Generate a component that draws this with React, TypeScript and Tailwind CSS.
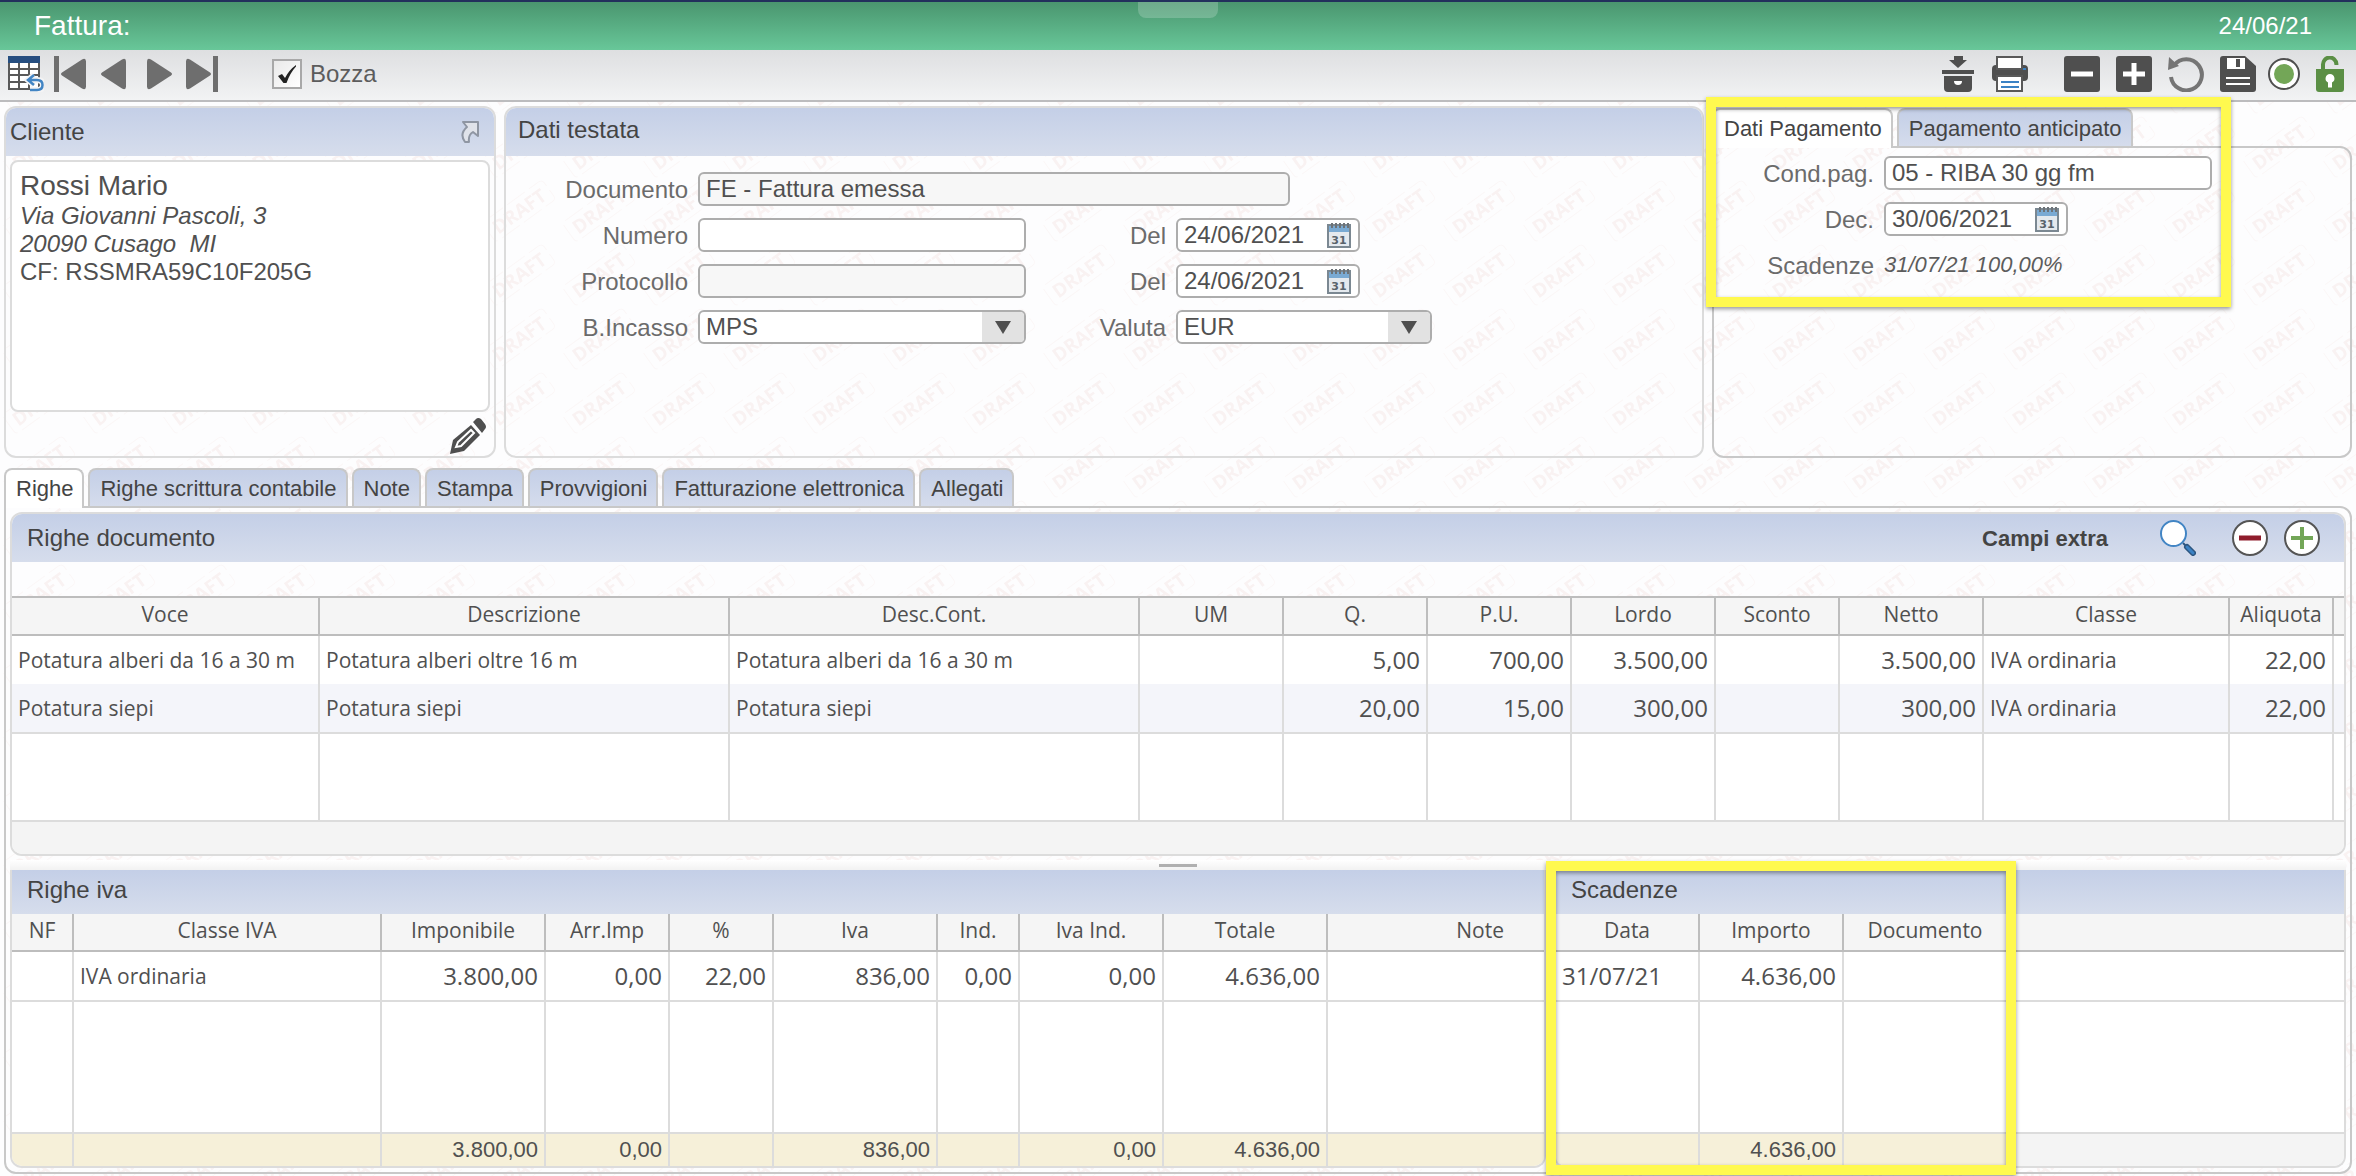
import { useState } from 'react'
import type { ReactNode } from 'react'

type Column = {
    label: string;
    width?: string;
    align?: string;
    header?: string;
}

const TEXT = "text-left text-[21px]";
const NUMBER = "text-right text-2xl";

const righeColumns: Column[] = [
    { label: "Voce", width: "w-[308px]", align: TEXT },
    { label: "Descrizione", width: "w-[410px]", align: TEXT },
    { label: "Desc.Cont.", width: "w-[410px]", align: TEXT },
    { label: "UM", width: "w-[144px]", align: TEXT },
    { label: "Q.", width: "w-[144px]", align: NUMBER },
    { label: "P.U.", width: "w-[144px]", align: NUMBER },
    { label: "Lordo", width: "w-[144px]", align: NUMBER },
    { label: "Sconto", width: "w-[124px]", align: NUMBER },
    { label: "Netto", width: "w-[144px]", align: NUMBER },
    { label: "Classe", width: "w-[246px]", align: TEXT },
    { label: "Aliquota", width: "w-[104px]", align: NUMBER },
    { label: "" },
];

const righeRows = [
    ["Potatura alberi da 16 a 30 m", "Potatura alberi oltre 16 m", "Potatura alberi da 16 a 30 m", "", "5,00", "700,00", "3.500,00", "", "3.500,00", "IVA ordinaria", "22,00", ""],
    ["Potatura siepi", "Potatura siepi", "Potatura siepi", "", "20,00", "15,00", "300,00", "", "300,00", "IVA ordinaria", "22,00", ""],
];

const ivaColumns: Column[] = [
    { label: "NF", width: "w-[62px]", align: TEXT },
    { label: "Classe IVA", width: "w-[308px]", align: TEXT },
    { label: "Imponibile", width: "w-[164px]", align: NUMBER },
    { label: "Arr.Imp", width: "w-[124px]", align: NUMBER },
    { label: "%", width: "w-[104px]", align: NUMBER },
    { label: "Iva", width: "w-[164px]", align: NUMBER },
    { label: "Ind.", width: "w-[82px]", align: NUMBER },
    { label: "Iva Ind.", width: "w-[144px]", align: NUMBER },
    { label: "Totale", width: "w-[164px]", align: NUMBER },
    { label: "Note", align: TEXT, header: "text-right pr-10" },
];

const ivaRows = [["", "IVA ordinaria", "3.800,00", "0,00", "22,00", "836,00", "0,00", "0,00", "4.636,00", ""]];
const ivaTotals = ["", "", "3.800,00", "0,00", "", "836,00", "", "0,00", "4.636,00", ""];

const scadenzeColumns: Column[] = [
    { label: "Data", width: "w-[144px]", align: "text-left text-2xl" },
    { label: "Importo", width: "w-[144px]", align: NUMBER },
    { label: "Documento", width: "w-[164px]", align: TEXT },
    { label: "" },
];

const scadenzeRows = [["31/07/21", "4.636,00", "", ""]];
const scadenzeTotals = ["", "4.636,00", "", ""];

const tabs = ["Righe", "Righe scrittura contabile", "Note", "Stampa", "Provvigioni", "Fatturazione elettronica", "Allegati"];

function DraftPattern() {
    return (
        <svg className="absolute inset-0 -z-10 h-full w-full" aria-hidden="true">
            <defs>
                <pattern id="draft" x="-1" y="-13" width="80" height="64" patternUnits="userSpaceOnUse">
                    <g transform="rotate(-36 40 32)">
                        <rect x="3" y="20" width="74" height="24" rx="4" fill="none" stroke="#fbf7f7" strokeDasharray="22 5" />
                        <text x="40" y="39" textAnchor="middle" fontFamily="Open Sans, sans-serif" fontSize="19" fontWeight="700" fill="#f9f2f2">DRAFT</text>
                    </g>
                </pattern>
            </defs>
            <rect width="100%" height="100%" fill="url(#draft)" />
        </svg>
    )
}

function IconButton({ label, className = "", children }: { label: string; className?: string; children: ReactNode }) {
    return (
        <button type="button" aria-label={label} className={`block shrink-0 cursor-pointer ${className}`}>
            {children}
        </button>
    )
}

function Toolbar() {
    const [draft, setDraft] = useState(true);

    return (
        <div className="flex h-[52px] items-center justify-between border-b-2 border-[#bcbcbe] bg-linear-to-b from-[#dedfe1] to-[#f2f3f4] pr-3 pb-[2px] pl-2">
            <div className="flex items-center">
                <IconButton label="Elenco">
                    <svg width="36" height="36" viewBox="0 0 36 36">
                        <rect x="1" y="1" width="30" height="32" fill="#fff" stroke="#595959" strokeWidth="2" />
                        <path d="M1 13h30M1 19h30M1 26h30M11 7v26M21 7v26" stroke="#595959" strokeWidth="2" />
                        <rect width="32" height="7" fill="#264e80" />
                        <path d="M26 19l-6 5 6 5M20 24h9q6 0 6 5t-6 5h-7" fill="none" stroke="#f4f4f5" strokeWidth="6" />
                        <path d="M26 19l-6 5 6 5M20 24h9q5.500 0 5.500 5t-5.500 5h-7" fill="none" stroke="#4285c4" strokeWidth="2.500" />
                    </svg>
                </IconButton>
                <IconButton label="Primo" className="ml-[10px]">
                    <svg width="32" height="36" viewBox="0 0 32 36" fill="#6e6e6e">
                        <path d="M0 0h5v36H0zM8 16.500L28 3.500q4-2 4 2v25q0 4-4 2L8 19.500q-2-1.500 0-3z" />
                    </svg>
                </IconButton>
                <IconButton label="Precedente" className="ml-[15px]">
                    <svg width="25" height="36" viewBox="0 0 25 36" fill="#6e6e6e">
                        <path d="M1 16.500L21 3.500q4-2 4 2v25q0 4-4 2L1 19.500q-2-1.500 0-3z" />
                    </svg>
                </IconButton>
                <IconButton label="Successivo" className="ml-[21px]">
                    <svg width="25" height="36" viewBox="0 0 25 36" fill="#6e6e6e">
                        <path d="M24 16.500L4 3.500q-4-2-4 2v25q0 4 4 2l20-13q2-1.500 0-3z" />
                    </svg>
                </IconButton>
                <IconButton label="Ultimo" className="ml-[14px]">
                    <svg width="32" height="36" viewBox="0 0 32 36" fill="#6e6e6e">
                        <path d="M27 0h5v36h-5zM24 16.500L4 3.500q-4-2-4 2v25q0 4 4 2l20-13q2-1.500 0-3z" />
                    </svg>
                </IconButton>
                <label className="ml-[54px] flex cursor-pointer items-center gap-2 text-2xl text-[#5c5c5c]">
                    <span className="relative block h-[30px] w-[30px]">
                        <input
                            type="checkbox"
                            checked={draft}
                            onChange={() => setDraft(!draft)}
                            className="block h-[30px] w-[30px] appearance-none border-2 border-[#a8a8a8] bg-linear-to-br from-[#e9e9e9] to-white"
                        />
                        {draft && (
                            <svg className="pointer-events-none absolute inset-0" width="30" height="30" viewBox="0 0 30 30">
                                <path d="M6 17l4-2 3 4Q17 11 24 6l0 1.500Q18 14 14.500 24h-3z" fill="#222" />
                            </svg>
                        )}
                    </span>
                    Bozza
                </label>
            </div>
            <div className="flex items-center">
                <IconButton label="Archivia">
                    <svg width="32" height="36" viewBox="0 0 32 36" fill="#4f4f4f">
                        <path d="M12 0h9v4h4l-9 8-9-8h5zM0 14h32v4H0zM2 20h28v12q0 4-4 4H6q-4 0-4-4z" />
                        <path d="M12 25h8q0 4-4 4t-4-4z" fill="#fff" />
                    </svg>
                </IconButton>
                <IconButton label="Stampa" className="ml-[18px]">
                    <svg width="36" height="36" viewBox="0 0 36 36">
                        <path d="M4 9h28q4 0 4 4v8q0 4-4 4H4q-4 0-4-4v-8q0-4 4-4z" fill="#4f4f4f" />
                        <path d="M5 1h25v12H5zM5 20h25v15H5z" fill="#fff" stroke="#595959" strokeWidth="2" />
                        <path d="M9 26h18M9 31h18" stroke="#3b82c4" strokeWidth="2" />
                        <path d="M31 12h3v2h-3z" fill="#3b82c4" />
                    </svg>
                </IconButton>
                <IconButton label="Elimina" className="ml-9">
                    <svg width="36" height="36" viewBox="0 0 36 36">
                        <rect width="36" height="36" rx="3" fill="#4f4f4f" />
                        <path d="M7 18h22" stroke="#fff" strokeWidth="5" />
                    </svg>
                </IconButton>
                <IconButton label="Nuovo" className="ml-4">
                    <svg width="36" height="36" viewBox="0 0 36 36">
                        <rect width="36" height="36" rx="3" fill="#4f4f4f" />
                        <path d="M7 18h22M18 7v22" stroke="#fff" strokeWidth="5" />
                    </svg>
                </IconButton>
                <IconButton label="Annulla" className="ml-4">
                    <svg width="36" height="36" viewBox="0 0 36 36">
                        <path d="M6 9.500A15.500 15.500 0 1 1 3 21" fill="none" stroke="#757575" strokeWidth="4" />
                        <path d="M1 1l10 9-11 4z" fill="#757575" />
                    </svg>
                </IconButton>
                <IconButton label="Salva" className="ml-4">
                    <svg width="36" height="36" viewBox="0 0 36 36">
                        <path d="M3 0h22l11 10v23q0 3-3 3H3q-3 0-3-3V3q0-3 3-3z" fill="#4f4f4f" />
                        <path d="M7 2h18v11H7z" fill="#fff" />
                        <path d="M16 3h4v8h-4z" fill="#4f4f4f" />
                        <path d="M6 22h24M6 28h24" stroke="#fff" strokeWidth="2" />
                    </svg>
                </IconButton>
                <IconButton label="Stato" className="ml-3">
                    <svg width="32" height="36" viewBox="0 0 32 36">
                        <circle cx="16" cy="18" r="15" fill="#fff" stroke="#4f4f4f" strokeWidth="2" />
                        <circle cx="16" cy="18" r="10" fill="#73a657" />
                    </svg>
                </IconButton>
                <IconButton label="Sblocca" className="ml-4">
                    <svg width="28" height="36" viewBox="0 0 28 36">
                        <path d="M7 14V9a6.700 7 0 0 1 13.400-1v1" fill="none" stroke="#5b8f45" strokeWidth="4" />
                        <path d="M0 13h28v20q0 3-3 3H3q-3 0-3-3z" fill="#5b8f45" />
                        <path d="M14 18a4.500 4.500 0 0 1 2 8.500v5h-4v-5A4.500 4.500 0 0 1 14 18z" fill="#fff" />
                    </svg>
                </IconButton>
            </div>
        </div>
    )
}

function CalendarIcon() {
    return (
        <svg width="24" height="26" viewBox="0 0 24 26">
            <rect x="1" y="3" width="22" height="22" fill="#e4e9ee" stroke="#7b8892" strokeWidth="2" />
            <rect x="2" y="4" width="20" height="6" fill="#7aaad3" />
            <path d="M5 1v5M9 1v5M13 1v5M17 1v5M21 1v5" stroke="#6d7378" strokeWidth="2" />
            <text x="12" y="22" textAnchor="middle" fontFamily="DejaVu Sans, sans-serif" fontSize="11" fontWeight="700" fill="#59636b">31</text>
        </svg>
    )
}

function TextField({ id, value = "", readOnly = false, className }: { id: string; value?: string; readOnly?: boolean; className: string }) {
    return (
        <input
            id={id}
            type="text"
            defaultValue={value}
            readOnly={readOnly}
            className={`h-[34px] rounded-md border-2 border-[#adadad] px-[6px] text-2xl leading-[30px] text-[#505050] ${readOnly ? "bg-[#f7f7f7]" : "bg-white"} ${className}`}
        />
    )
}

function DateField({ id, value }: { id: string; value: string }) {
    return (
        <div className="flex h-[34px] w-[184px] items-center rounded-md border-2 border-[#adadad] bg-white pr-[7px] pl-[6px]">
            <input id={id} type="text" defaultValue={value} className="w-full min-w-0 text-2xl leading-[30px] text-[#505050]" />
            <IconButton label="Apri calendario">
                <CalendarIcon />
            </IconButton>
        </div>
    )
}

function SelectField({ id, value, className }: { id: string; value: string; className: string }) {
    return (
        <div className={`relative h-[34px] ${className}`}>
            <select id={id} defaultValue={value} className="h-[34px] w-full appearance-none rounded-md border-2 border-[#adadad] bg-white px-[6px] text-2xl leading-[30px] text-[#505050]">
                <option>{value}</option>
            </select>
            <span className="pointer-events-none absolute inset-y-[2px] right-[2px] flex w-[42px] items-center justify-center rounded-r bg-[#e2e2e2]">
                <svg width="16" height="13" viewBox="0 0 16 13" fill="#4f4f4f">
                    <path d="M0 0h16L8 13z" />
                </svg>
            </span>
        </div>
    )
}

function FieldLabel({ htmlFor, children }: { htmlFor: string; children: ReactNode }) {
    return (
        <label htmlFor={htmlFor} className="text-right text-2xl leading-[35px] text-[#6b6b6b]">{children}</label>
    )
}

function Tab({ active = false, onClick, children }: { active?: boolean; onClick?: () => void; children: ReactNode }) {
    return (
        <button
            type="button"
            role="tab"
            aria-selected={active}
            onClick={onClick}
            className={`cursor-pointer rounded-t-lg border-2 border-b-0 border-[#c8c8c8] pr-[9px] pl-[10px] text-[22px] whitespace-nowrap text-[#444] ${active ? "h-10 bg-white pb-[2px]" : "h-[38px] bg-linear-to-b from-[#c4cfe7] to-[#d5dcec]"}`}
        >
            {children}
        </button>
    )
}

function DataTable({ columns, rows, totals, spacer }: { columns: Column[]; rows: string[][]; totals?: string[]; spacer: string }) {
    const line = (i: number) => i < columns.length - 1 ? "border-r-2" : "";

    return (
        <table className="w-full table-fixed border-separate border-spacing-0 font-['Open_Sans',sans-serif] text-[#505050]">
            <thead>
                <tr className="h-[38px]">
                    {columns.map((column, i) => (
                        <th key={i} className={`border-b-2 border-[#bdbdbd] bg-[#f5f5f5] px-[6px] pb-1 text-[21px] leading-7 font-normal ${column.width ?? ""} ${column.header ?? "text-center"} ${line(i)}`}>
                            {column.label}
                        </th>
                    ))}
                </tr>
            </thead>
            <tbody className="bg-white">
                {rows.map((row, r) => (
                    <tr key={r} className={`${r % 2 ? "bg-[#f4f5fa]" : ""} ${r === rows.length - 1 ? "h-[50px]" : "h-12"}`}>
                        {row.map((cell, i) => (
                            <td key={i} className={`border-[#dcdcdc] px-[6px] leading-7 whitespace-nowrap ${columns[i].align ?? ""} ${line(i)} ${r === rows.length - 1 ? "border-b-2" : ""}`}>
                                {cell}
                            </td>
                        ))}
                    </tr>
                ))}
                <tr className={spacer}>
                    {columns.map((_, i) => (
                        <td key={i} className={`border-[#dcdcdc] ${line(i)}`}></td>
                    ))}
                </tr>
            </tbody>
            {totals && (
                <tfoot>
                    <tr className="h-[34px] font-['Liberation_Sans',sans-serif]">
                        {totals.map((total, i) => (
                            <td key={i} className={`border-t-2 border-[#dcdcdc] px-[6px] text-right text-[22px] leading-7 ${columns[i].label ? `bg-[#f6f0d9] ${line(i)}` : "bg-[#f4f4f4]"}`}>
                                {total}
                            </td>
                        ))}
                    </tr>
                </tfoot>
            )}
        </table>
    )
}

function Cliente() {
    return (
        <section className="w-[492px] shrink-0 overflow-hidden rounded-xl border-2 border-[#dcdcdc]">
            <div className="flex h-12 items-center justify-between bg-linear-to-b from-[#c4cfe7] to-[#d6ddec] pr-[14px] pl-1">
                <h2 className="text-2xl text-[#444]">Cliente</h2>
                <IconButton label="Apri cliente">
                    <svg width="20" height="24" viewBox="0 0 20 24">
                        <path d="M3 2h15v14l-5-4q-5 3-4 10H5Q-1 14 7 7z" fill="#e0e3ea" stroke="#8f96a3" strokeWidth="2" strokeLinejoin="round" />
                    </svg>
                </IconButton>
            </div>
            <div className="m-1 mb-0 h-[252px] rounded-lg border-2 border-[#dcdcdc] bg-white px-2 pt-2 text-2xl leading-7 text-[#505050]">
                <p className="text-[28px] leading-8">Rossi Mario</p>
                <p className="italic">Via Giovanni Pascoli, 3</p>
                <p className="whitespace-pre italic">20090 Cusago  MI</p>
                <p>CF: RSSMRA59C10F205G</p>
            </div>
            <div className="flex justify-end pt-[6px] pr-2 pb-[2px]">
                <IconButton label="Modifica cliente">
                    <svg width="36" height="36" viewBox="0 0 36 36" fill="#4f4f4f">
                        <path d="M23 4l3-3q2-2 5 0l4 5q2 3 0 5l-3 4z" />
                        <path d="M21 7l9 10-16 16-14 3 3-14z" />
                        <path d="M6 29l2-5L21 12l3 3-13 13z" fill="none" stroke="#fff" strokeWidth="2" />
                    </svg>
                </IconButton>
            </div>
        </section>
    )
}

function DatiTestata() {
    return (
        <section className="min-w-0 flex-1 overflow-hidden rounded-xl border-2 border-[#dcdcdc]">
            <h2 className="h-12 bg-linear-to-b from-[#c4cfe7] to-[#d6ddec] pl-3 text-2xl leading-[44px] text-[#444]">Dati testata</h2>
            <div className="grid auto-rows-[34px] grid-cols-[182px_328px_130px_256px] gap-x-[10px] gap-y-3 pt-4">
                <FieldLabel htmlFor="documento">Documento</FieldLabel>
                <TextField id="documento" value="FE - Fattura emessa" readOnly className="col-span-3 w-[592px]" />
                <FieldLabel htmlFor="numero">Numero</FieldLabel>
                <TextField id="numero" className="w-full" />
                <FieldLabel htmlFor="numero-del">Del</FieldLabel>
                <DateField id="numero-del" value="24/06/2021" />
                <FieldLabel htmlFor="protocollo">Protocollo</FieldLabel>
                <TextField id="protocollo" readOnly className="w-full" />
                <FieldLabel htmlFor="protocollo-del">Del</FieldLabel>
                <DateField id="protocollo-del" value="24/06/2021" />
                <FieldLabel htmlFor="incasso">B.Incasso</FieldLabel>
                <SelectField id="incasso" value="MPS" className="w-full" />
                <FieldLabel htmlFor="valuta">Valuta</FieldLabel>
                <SelectField id="valuta" value="EUR" className="w-full" />
            </div>
        </section>
    )
}

function DatiPagamento() {
    return (
        <section className="relative flex w-[640px] shrink-0 flex-col pt-[2px]">
            <div role="tablist" className="relative z-10 -mb-[2px] flex items-start gap-1">
                <Tab active>Dati Pagamento</Tab>
                <Tab>Pagamento anticipato</Tab>
            </div>
            <div className="grid flex-1 auto-rows-[34px] grid-cols-[160px_328px] content-start gap-x-[10px] gap-y-3 rounded-xl rounded-tl-none border-2 border-[#c8c8c8] pt-2">
                <FieldLabel htmlFor="condpag">Cond.pag.</FieldLabel>
                <TextField id="condpag" value="05 - RIBA 30 gg fm" className="w-full" />
                <FieldLabel htmlFor="decorrenza">Dec.</FieldLabel>
                <DateField id="decorrenza" value="30/06/2021" />
                <FieldLabel htmlFor="scadenze">Scadenze</FieldLabel>
                <output id="scadenze" className="text-[22px] leading-[34px] text-[#5c5c5c] italic">31/07/21 100,00%</output>
            </div>
            <div className="pointer-events-none absolute -top-[9px] -left-[6px] z-20 h-[210px] w-[525px] border-10 border-[#fff94f] drop-shadow-[0_2px_2px_rgba(0,0,0,0.4)]"></div>
        </section>
    )
}

function RigheDocumento() {
    return (
        <section className="overflow-hidden rounded-xl border-2 border-[#dcdcdc]">
            <div className="flex h-12 items-center bg-linear-to-b from-[#c4cfe7] to-[#d6ddec] pr-6 pl-[15px]">
                <h2 className="flex-1 text-2xl text-[#444]">Righe documento</h2>
                <button type="button" className="mr-[52px] cursor-pointer text-[22px] font-bold text-[#444]">Campi extra</button>
                <IconButton label="Cerca">
                    <svg width="36" height="36" viewBox="0 0 36 36">
                        <path d="M23 23l4 4" stroke="#2d5680" strokeWidth="2" />
                        <path d="M27 27l6 6" stroke="#2d5680" strokeWidth="6" strokeLinecap="round" />
                        <path d="M27 27l6 6" stroke="#3b82c4" strokeWidth="3" strokeLinecap="round" />
                        <circle cx="13.500" cy="13.500" r="12.500" fill="#fff" stroke="#4285c4" strokeWidth="2" />
                    </svg>
                </IconButton>
                <IconButton label="Rimuovi riga" className="ml-9">
                    <svg width="36" height="36" viewBox="0 0 36 36">
                        <circle cx="18" cy="18" r="17" fill="#fff" stroke="#555" strokeWidth="2" />
                        <path d="M7 18h22" stroke="#8f1d2c" strokeWidth="5" />
                    </svg>
                </IconButton>
                <IconButton label="Aggiungi riga" className="ml-4">
                    <svg width="36" height="36" viewBox="0 0 36 36">
                        <circle cx="18" cy="18" r="17" fill="#fff" stroke="#555" strokeWidth="2" />
                        <path d="M7 18h22M18 7v22" stroke="#73a657" strokeWidth="4" />
                    </svg>
                </IconButton>
            </div>
            <div className="mt-[34px] border-t-2 border-[#bdbdbd]">
                <DataTable columns={righeColumns} rows={righeRows} spacer="h-[86px]" />
            </div>
            <div className="h-[34px] border-t-2 border-[#dcdcdc] bg-[#f4f4f4]"></div>
        </section>
    )
}

export default function App() {
    const [activeTab, setActiveTab] = useState("Righe");

    return (
        <div className="relative isolate flex min-h-screen flex-col overflow-hidden bg-[#fdfdfe] font-['Liberation_Sans',Arial,sans-serif]">
            <DraftPattern />
            <header className="relative flex h-[50px] items-center justify-between border-t-2 border-[#22305c] bg-linear-to-b from-[#4a966f] to-[#68c799] pr-11 pl-[34px] text-white">
                <h1 className="text-[28px]">Fattura:</h1>
                <span className="absolute top-0 left-1/2 h-4 w-20 -translate-x-1/2 rounded-b-lg bg-white/20"></span>
                <time className="text-2xl">24/06/21</time>
            </header>
            <Toolbar />
            <main className="p-1">
                <div className="mb-[10px] flex gap-2">
                    <Cliente />
                    <DatiTestata />
                    <DatiPagamento />
                </div>
                <div role="tablist" className="relative z-10 -mb-[2px] flex items-start gap-1">
                    {tabs.map((tab) => (
                        <Tab key={tab} active={tab === activeTab} onClick={() => setActiveTab(tab)}>{tab}</Tab>
                    ))}
                </div>
                <div className="rounded-xl rounded-tl-none border-2 border-[#c8c8c8] p-1">
                    <RigheDocumento />
                    <div className="mt-1 flex h-[10px] items-center justify-center bg-linear-to-b from-white to-[#f2f2f2]">
                        <span className="h-[3px] w-[38px] bg-[#b0b0b0]"></span>
                    </div>
                    <div className="flex gap-2">
                        <section className="w-[1536px] shrink-0 overflow-hidden rounded-b-xl border-2 border-t-0 border-[#dcdcdc]">
                            <h2 className="h-11 bg-linear-to-b from-[#c4cfe7] to-[#d6ddec] pl-[15px] text-2xl leading-10 text-[#444]">Righe iva</h2>
                            <DataTable columns={ivaColumns} rows={ivaRows} totals={ivaTotals} spacer="h-[130px]" />
                        </section>
                        <div className="relative min-w-0 flex-1">
                            <section className="overflow-hidden rounded-b-xl border-2 border-t-0 border-[#dcdcdc]">
                                <h2 className="h-11 bg-linear-to-b from-[#c4cfe7] to-[#d6ddec] pl-[15px] text-2xl leading-10 text-[#444]">Scadenze</h2>
                                <DataTable columns={scadenzeColumns} rows={scadenzeRows} totals={scadenzeTotals} spacer="h-[130px]" />
                            </section>
                            <div className="pointer-events-none absolute -top-[9px] -left-2 z-20 h-[314px] w-[470px] border-10 border-[#fff94f] drop-shadow-[0_2px_2px_rgba(0,0,0,0.4)]"></div>
                        </div>
                    </div>
                </div>
            </main>
        </div>
    )
}
